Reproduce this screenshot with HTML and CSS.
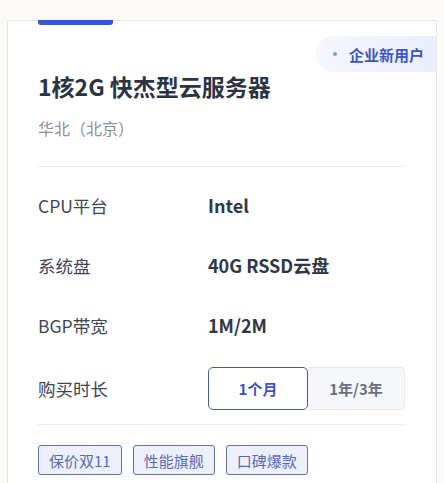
FILE: index.html
```html
<!DOCTYPE html>
<html lang="zh-CN">
<head>
<meta charset="utf-8">
<link rel="stylesheet" href="styles.css">
</head>
<body>
<div class="card">
  <div class="topbar"></div>
  <div class="badge"><span class="dot"></span>企业新用户</div>
  <h1 class="title">1核2G 快杰型云服务器</h1>
  <div class="region">华北（北京）</div>
  <div class="divider first"></div>
  <div class="specs">
    <div class="row"><span class="label">CPU平台</span><span class="value">Intel</span></div>
    <div class="row"><span class="label">系统盘</span><span class="value">40G RSSD云盘</span></div>
    <div class="row"><span class="label">BGP带宽</span><span class="value">1M/2M</span></div>
    <div class="row duration"><span class="label">购买时长</span>
      <div class="seg">
        <span class="opt active">1个月</span>
        <span class="opt">1年/3年</span>
      </div>
    </div>
  </div>
  <div class="divider second"></div>
  <div class="tags">
    <span class="tag">保价双11</span>
    <span class="tag">性能旗舰</span>
    <span class="tag">口碑爆款</span>
  </div>
</div>
</body>
</html>
```
FILE: styles.css
```css
html, body {
  margin: 0;
  padding: 0;
  background: #fcfaf7;
}
body {
  font-family: "Noto Sans CJK SC", "Noto Sans", sans-serif;
  padding-top: 20px;
  height: 483px;
  overflow: hidden;
  box-sizing: border-box;
}
.card {
  position: relative;
  margin-left: 7px;
  width: 430px;
  box-sizing: border-box;
  border: 1px solid #e6e8ee;
  border-bottom: none;
  background: #fff;
  padding: 0 30px 8px 30px;
}
.topbar {
  width: 75px;
  height: 5px;
  margin-top: -1px;
  background: #3756d6;
  border-radius: 0 0 3px 3px;
}
.badge {
  position: absolute;
  top: 15px;
  right: -1px;
  height: 36px;
  width: 121px;
  box-sizing: border-box;
  border-radius: 18px 0 0 18px;
  background: linear-gradient(90deg, #f5f7fd 0%, #eaeefb 100%);
  display: flex;
  align-items: center;
  padding-left: 17px;
  font-size: 15px;
  font-weight: 700;
  color: #3e55c4;
}
.dot {
  width: 4px;
  height: 4px;
  border-radius: 50%;
  background: #8a96cf;
  margin-right: 12px;
}
.title {
  margin: 46px 0 0 0;
  font-size: 23px;
  line-height: 30px;
  font-weight: 700;
  color: #2b3345;
}
.region {
  margin-top: 15px;
  font-size: 16px;
  line-height: 24px;
  color: #8c9099;
}
.divider {
  height: 1px;
  background: #eceef2;
}
.divider.first { margin-top: 26px; }
.specs { padding-top: 8px; }
.row {
  display: flex;
  align-items: center;
  height: 60px;
}
.label {
  width: 170px;
  font-size: 17.5px;
  color: #3f4555;
}
.value {
  font-size: 18px;
  font-weight: 700;
  color: #2f3648;
}
.row.duration {
  height: 43px;
  margin-top: 12px;
}
.seg {
  display: flex;
  height: 43px;
}
.opt {
  display: flex;
  align-items: center;
  justify-content: center;
  box-sizing: border-box;
  font-size: 15px;
  font-weight: 700;
}
.opt.active {
  width: 100px;
  border: 1px solid #4b5c8c;
  border-radius: 5px;
  background: #fff;
  color: #3e55c4;
}
.opt:not(.active) {
  width: 97px;
  border: 1px solid #e8eaf0;
  border-left: none;
  border-radius: 0 5px 5px 0;
  background: #f6f7fb;
  color: #6b7080;
}
.divider.second { margin-top: 14px; }
.tags {
  display: flex;
  gap: 11px;
  margin-top: 20px;
}
.tag {
  height: 30px;
  box-sizing: border-box;
  padding: 0 10px;
  display: flex;
  align-items: center;
  border: 1px solid #6273a8;
  border-radius: 3px;
  background: #edf0fa;
  color: #5a6bb5;
  font-size: 15px;
}
```
